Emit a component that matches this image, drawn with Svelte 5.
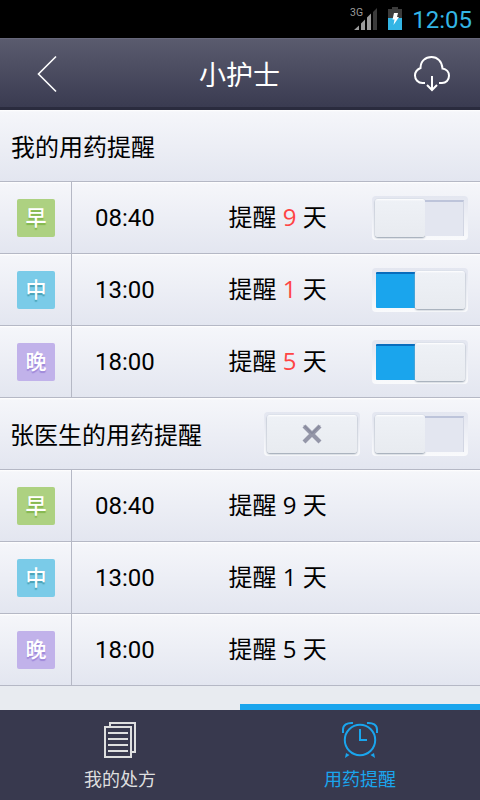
<script lang="ts">
  interface Reminder {
    slot: string;
    kind: 'morning' | 'noon' | 'night';
    time: string;
    days: number;
  }

  const reminders: Reminder[] = [
    { slot: '早', kind: 'morning', time: '08:40', days: 9 },
    { slot: '中', kind: 'noon', time: '13:00', days: 1 },
    { slot: '晚', kind: 'night', time: '18:00', days: 5 }
  ];

  let enabled = $state([false, true, true]);
  let doctorEnabled = $state(false);
</script>

{#snippet toggle(on: boolean, label: string, flip: () => void)}
  <button type="button" class="frame" class:on role="switch" aria-checked={on} aria-label={label} onclick={flip}>
    <span class="groove"></span>
    <span class="knob"></span>
  </button>
{/snippet}

<div class="screen">
  <div class="status">
    <svg width="28" height="26" viewBox="0 0 28 26">
      <text x="0" y="10" class="net" textLength="13" lengthAdjust="spacingAndGlyphs">3G</text>
      <path d="M4 24 L9 19.5 V24Z M11 24 V17.5 L15 13.5 V24Z M17 24 V11.5 L21 7.5 V24Z" fill="#9c9c9c" />
      <path d="M23 24 V6 L27 2 V24Z" fill="#3b3b3b" />
    </svg>
    <svg class="battery" width="14" height="23" viewBox="0 0 14 23">
      <path d="M0 2 H4 V0 H10 V2 H14 V11 H0Z" fill="#3c3c3c" />
      <path d="M0 11 H14 V23 H0Z" fill="#33b5e5" />
      <path d="M6 6 H10 L9 10 H11 L5.5 18 L6.5 12.5 H4.500Z" fill="#fff" />
    </svg>
    <span class="clock">12:05</span>
  </div>

  <header>
    <svg width="22" height="38" viewBox="0 0 22 38">
      <path d="M20 1.500 L2.500 19 L20 36.500" fill="none" stroke="#fff" stroke-width="1.600" />
    </svg>
    <h1>小护士</h1>
    <svg class="download" width="38" height="38" viewBox="0 0 38 38" fill="none" stroke="#fff" stroke-width="2">
      <path d="M12 28 H9.500 C5 28 2 24.500 2 20.500 C2 17 4 14.500 7.500 13 C7.500 6 12.500 2 18.500 2 C24.500 2 29 6.500 29.500 13.500 C33.500 14 36 17 36 20.800 C36 25 33 28 29 28 H26" />
      <path d="M19 21 V35 M14 30 L19 35 L24 30" />
    </svg>
  </header>

  <main>
    <div class="row heading">我的用药提醒</div>
    {#each reminders as item, i}
      <div class="row">
        <div class="slot"><span class="badge {item.kind}">{item.slot}</span></div>
        <span class="time">{item.time}</span>
        <span class="days">提醒 <em>{item.days}</em> 天</span>
        {@render toggle(enabled[i], item.slot, () => (enabled[i] = !enabled[i]))}
      </div>
    {/each}

    <div class="row heading">
      <span class="name">张医生的用药提醒</span>
      <button type="button" class="frame remove" aria-label="删除">
        <span class="knob">
          <svg width="22" height="22" viewBox="0 0 22 22">
            <path d="M3 3 L19 19 M19 3 L3 19" stroke="#9496a8" stroke-width="4.200" />
            <path d="M3 2.500 L11 10.500 L19 2.500" fill="none" stroke="#7f8296" stroke-width="1" />
          </svg>
        </span>
      </button>
      {@render toggle(doctorEnabled, '张医生', () => (doctorEnabled = !doctorEnabled))}
    </div>
    {#each reminders as item}
      <div class="row">
        <div class="slot"><span class="badge {item.kind}">{item.slot}</span></div>
        <span class="time">{item.time}</span>
        <span class="days">提醒 {item.days} 天</span>
      </div>
    {/each}
  </main>

  <div class="indicator"><span></span></div>
  <nav>
    <div class="tab">
      <svg width="36" height="38" viewBox="0 0 36 38" fill="none" stroke="currentColor" stroke-width="2">
        <path d="M8 6 V2 H33 V31 H29" />
        <path d="M3 6 H29 V36 H3Z M6 12 H26 M6 18 H26 M6 24 H26 M6 30 H26" />
      </svg>
      <span>我的处方</span>
    </div>
    <div class="tab active">
      <svg width="36" height="38" viewBox="0 0 36 38" fill="none" stroke="currentColor" stroke-width="2">
        <circle cx="18" cy="19" r="15.200" />
        <path d="M18 8 V19 H25" />
        <path d="M1 12 V8.500 C1 4 5 1.500 11 2 M35 12 V8.500 C35 4 31 1.500 25 2" />
        <path d="M4 32 L7.500 34 L3 37Z M32 32 L28.500 34 L33 37Z" fill="currentColor" stroke="none" />
      </svg>
      <span>用药提醒</span>
    </div>
  </nav>
</div>

<style>
  :global(body) {
    margin: 0;
    background: #e8ebf0;
  }

  .screen {
    display: flex;
    flex-direction: column;
    width: 480px;
    height: 800px;
    overflow: hidden;
    font-family: Roboto, 'Noto Sans CJK SC', sans-serif;
    font-size: 24px;
    color: #000;
    background: #e8ebf0;
  }

  .status {
    display: flex;
    flex: 0 0 38px;
    box-sizing: border-box;
    align-items: flex-start;
    justify-content: flex-end;
    padding: 6px 8px 0 0;
    background: #000;
  }

  .net {
    font-size: 11.5px;
    fill: #9c9c9c;
  }

  .battery {
    margin: 1px 10px 0 10px;
  }

  .clock {
    line-height: 28px;
    font-size: 24px;
    color: #33b5e5;
  }

  header {
    display: flex;
    flex: 0 0 72px;
    box-sizing: border-box;
    align-items: center;
    justify-content: space-between;
    padding: 2px 29px 0 36px;
    border-top: 1px solid #66677a;
    border-bottom: 3px solid #2a2b3e;
    background: linear-gradient(#5a5b6e, #3a3b51);
  }

  h1 {
    margin: 3px 0 0 8px;
    font-size: 27px;
    font-weight: 400;
    line-height: 40px;
    color: #fff;
  }

  .row {
    display: flex;
    box-sizing: border-box;
    height: 72px;
    align-items: center;
    padding-right: 12px;
    border-bottom: 1px solid #b5b8c5;
    background: linear-gradient(#fff 0, #f5f6fa 2px, #e3e6f0);
  }

  .heading {
    padding-left: 11px;
  }

  .name {
    flex: 1;
    margin-left: -1px;
  }

  .slot {
    display: flex;
    box-sizing: border-box;
    width: 72px;
    height: 71px;
    align-items: center;
    padding-left: 17px;
    border-right: 1px solid #b5b8c5;
  }

  .badge {
    width: 38px;
    height: 38px;
    border-radius: 2px;
    font-size: 21px;
    font-weight: 500;
    line-height: 39px;
    text-align: center;
    color: #fff;
  }

  .morning {
    background: #add181;
    text-shadow: 0 2px 1px #83b74c;
  }

  .noon {
    background: #7acbe8;
    text-shadow: 0 2px 1px #48a1b5;
  }

  .night {
    background: #c1b2ea;
    text-shadow: 0 2px 1px #9e87d9;
  }

  .time {
    width: 133px;
    margin-left: 23px;
  }

  .days {
    flex: 1;
    padding-left: 0.5px;
    font-family: 'Open Sans', 'Noto Sans CJK SC', sans-serif;
    line-height: 34px;
    padding-bottom: 2px;
  }

  em {
    font-style: normal;
    color: #ff4444;
  }

  .frame {
    display: flex;
    box-sizing: border-box;
    width: 96px;
    height: 44px;
    flex: none;
    align-items: center;
    padding: 3px;
    border: 0;
    border-radius: 4px;
    background: linear-gradient(#e3e6f0, #f9fafc);
  }

  .groove {
    order: 2;
    width: 39px;
    height: 36px;
    box-sizing: border-box;
    border-top: 2px solid #bdc4da;
    border-right: 1px solid #d2d6e3;
    background: #e3e6f0;
  }

  .knob {
    display: flex;
    order: 1;
    width: 50px;
    height: 38px;
    align-items: center;
    justify-content: center;
    border-radius: 3px;
    background: linear-gradient(#fff 0, #eef1f6 2px, #e8ebf0);
    box-shadow: 0 1px 2px #929dab, 0 0 1px #c8d0dc;
  }

  .on .groove {
    order: 0;
    margin-left: 1px;
    border-top: 2px solid #086cbc;
    border-right: 0;
    border-radius: 1px 0 0 1px;
    background: #1aa5ed;
  }

  .remove {
    margin-right: 12px;
  }

  .remove .knob {
    width: 90px;
  }

  .indicator {
    display: flex;
    flex: 0 0 24px;
    align-items: flex-end;
    justify-content: flex-end;
  }

  .indicator span {
    width: 50%;
    height: 6px;
    background: #1aa5ed;
  }

  nav {
    display: flex;
    flex: 0 0 90px;
    background: #38394e;
  }

  .tab {
    display: flex;
    flex: 1;
    flex-direction: column;
    align-items: center;
    padding-top: 11px;
    font-size: 18px;
    line-height: 26px;
    color: #dedfdf;
  }

  .tab span {
    margin-top: 8px;
  }

  .active {
    color: #1aa5ed;
  }
</style>
